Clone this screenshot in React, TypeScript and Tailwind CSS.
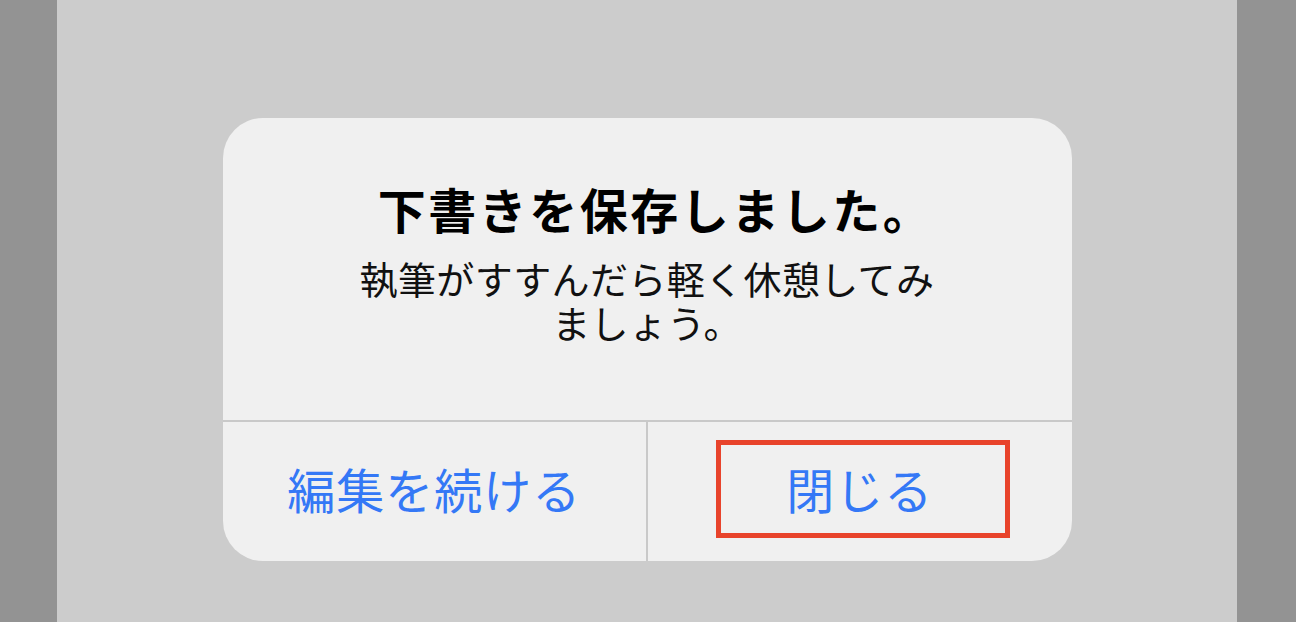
const jp = "font-['Noto_Sans_CJK_JP','Noto_Sans',sans-serif]";

export default function App() {
  return (
    <div className={`flex h-[622px] w-[1296px] overflow-hidden ${jp}`}>
      <div className="w-[57px] shrink-0 bg-[#939393]" />
      <div className="flex flex-1 justify-center bg-[#cccccc] pt-[118px]">
        <div className="flex h-[443px] w-[849px] flex-col overflow-hidden rounded-[40px] bg-[#f0f0f0]">
          <div className="flex h-[304px] flex-col items-center border-b-[2px] border-[#c9c9c9] pt-[62px]">
            <h1 className="ml-[17px] text-[48px] font-bold leading-[56px] tracking-[2.5px] text-black">下書きを保存しました。</h1>
            <p className="mt-[20px] max-w-[600px] text-center text-[38px] leading-[44px] tracking-[0.4px] text-[#111]">
              執筆がすすんだら軽く休憩してみましょう。
            </p>
          </div>
          <div className="flex flex-1">
            <button className="flex flex-1 items-center justify-center border-r-[2px] border-[#c9c9c9] pb-[8px] text-[48px] tracking-[1px] text-[#3478f6]">
              編集を続ける
            </button>
            <button className="relative flex flex-1 items-center justify-center pb-[8px] text-[48px] tracking-[1px] text-[#3478f6]">
              閉じる
              <span className="absolute left-[68px] top-[18px] h-[98px] w-[294px] border-[5px] border-[#e8432b]" />
            </button>
          </div>
        </div>
      </div>
      <div className="w-[59px] shrink-0 bg-[#939393]" />
    </div>
  );
}
